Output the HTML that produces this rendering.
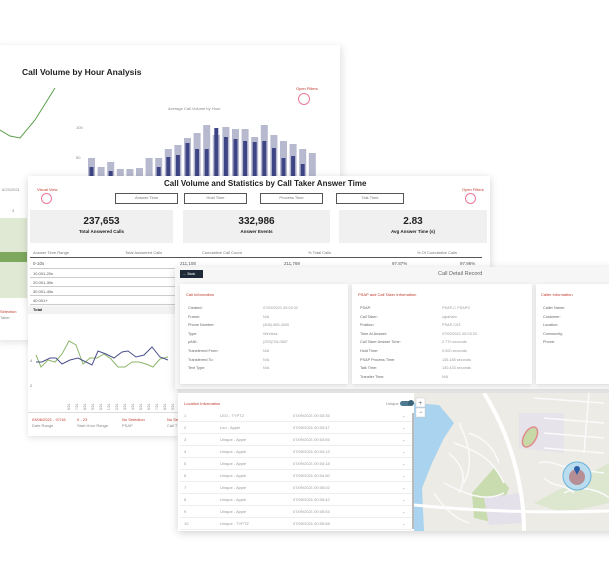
<!DOCTYPE html>
<html><head><meta charset="utf-8"><style>
*{margin:0;padding:0;box-sizing:border-box}
body{width:609px;height:563px;background:#fff;position:relative;overflow:hidden;font-family:"Liberation Sans",sans-serif;color:#444}
.a{position:absolute}
.p{position:absolute;background:#fff;box-shadow:0 2px 8px rgba(0,0,0,.18)}
.t{position:absolute;font-size:4px;color:#888;white-space:nowrap}
.r{color:#c0392b}
.btn{position:absolute;border:1.5px solid #555;height:11px;font-size:4px;color:#777;text-align:center;line-height:8px;background:#fff}
.kpi{position:absolute;background:#f0f0f0;text-align:center}
.kpi b{display:block;font-size:10px;color:#222;margin-top:6px}
.kpi i{display:block;font-style:normal;font-weight:bold;font-size:4.5px;color:#222;margin-top:2px}
.row{position:absolute;left:0;height:9px;border-bottom:1px solid #ccc;font-size:4px;color:#555;line-height:9px;padding-left:3px}
.card{position:absolute;background:#fff;box-shadow:0 1px 4px rgba(0,0,0,.12)}
.lr{position:absolute;left:0;width:232px;height:12px;border-bottom:1px solid #eee;font-size:4px;color:#999;line-height:12px}
</style></head><body>

<div class="p" style="left:-5px;top:45px;width:345px;height:295px;box-shadow:2px 2px 8px rgba(0,0,0,.12)"></div>
<div class="a" style="left:22px;top:67px;font-size:8.5px;font-weight:bold;color:#222">Call Volume by Hour Analysis</div>
<div class="t r" style="left:296px;top:86px">Open Filters</div>
<div class="a" style="left:298px;top:93px;width:12px;height:12px;border:1px solid #e79;border-radius:50%"></div>
<div class="t" style="left:168px;top:106px">Average Call Volume by Hour</div>
<div class="t" style="left:76px;top:125px">100</div>
<div class="t" style="left:76px;top:155px">50</div>
<svg class="a" style="left:0;top:80px" width="340" height="100">
<polyline points="0,50 10,56 20,58 35,40 55,8" fill="none" stroke="#5a9f4a" stroke-width="1"/>
<g fill="#b7b9cf">
<rect x="88" y="78" width="7" height="20"/><rect x="97.6" y="87" width="7" height="11"/><rect x="107.2" y="82" width="7" height="16"/><rect x="116.8" y="89" width="7" height="9"/><rect x="126.4" y="89" width="7" height="9"/><rect x="136" y="88" width="7" height="10"/><rect x="145.6" y="78" width="7" height="20"/><rect x="155.2" y="78" width="7" height="20"/><rect x="164.8" y="69" width="7" height="29"/><rect x="174.4" y="65" width="7" height="33"/><rect x="184" y="58" width="7" height="40"/><rect x="193.6" y="53" width="7" height="45"/><rect x="203.2" y="45" width="7" height="53"/><rect x="212.8" y="55" width="7" height="43"/><rect x="222.4" y="47" width="7" height="51"/><rect x="232" y="49" width="7" height="49"/><rect x="241.6" y="49" width="7" height="49"/><rect x="251.2" y="57" width="7" height="41"/><rect x="260.8" y="45" width="7" height="53"/><rect x="270.4" y="55" width="7" height="43"/><rect x="280" y="61" width="7" height="37"/><rect x="289.6" y="64" width="7" height="34"/><rect x="299.2" y="69" width="7" height="29"/><rect x="308.8" y="73" width="7" height="25"/>
</g>
<g fill="#3d4585">
<rect x="89.5" y="87" width="4" height="11"/><rect x="108.7" y="91" width="4" height="7"/><rect x="156.7" y="87" width="4" height="11"/><rect x="166.3" y="77" width="4" height="21"/><rect x="175.9" y="75" width="4" height="23"/><rect x="185.5" y="63" width="4" height="35"/><rect x="195.1" y="69" width="4" height="29"/><rect x="204.7" y="69" width="4" height="29"/><rect x="214.3" y="48" width="4" height="50"/><rect x="223.9" y="57" width="4" height="41"/><rect x="233.5" y="59" width="4" height="39"/><rect x="243.1" y="61" width="4" height="37"/><rect x="252.7" y="62" width="4" height="36"/><rect x="262.3" y="61" width="4" height="37"/><rect x="271.9" y="68" width="4" height="30"/><rect x="281.5" y="78" width="4" height="20"/><rect x="291.1" y="76" width="4" height="22"/><rect x="300.7" y="84" width="4" height="14"/>
</g></svg>
<div class="t" style="left:2px;top:187px">6/23/2021</div>
<div class="t" style="left:12px;top:208px">3</div>
<div class="a" style="left:0;top:218px;width:27px;height:80px;background:#dfe9d4"></div>
<div class="a" style="left:0;top:252px;width:27px;height:10px;background:#7da85e"></div>
<div class="t r" style="left:0;top:309px">Selection</div>
<div class="t" style="left:0;top:315px">Taker</div>

<div class="p" style="left:28px;top:176px;width:462px;height:130px"></div>
<div class="p" style="left:28px;top:306px;width:150px;height:130px;box-shadow:0 2px 6px rgba(0,0,0,.12)"></div>
<div class="a" style="left:28px;top:306px;width:150px;height:8px;background:#f2f2f2"></div>
<div class="a" style="left:28px;top:179px;width:462px;text-align:center;font-size:8px;font-weight:bold;color:#222;padding-left:56px;white-space:nowrap;text-align:left;padding-left:136px">Call Volume and Statistics by Call Taker Answer Time</div>
<div class="t r" style="left:37px;top:187px">Visual View</div>
<div class="a" style="left:41px;top:193px;width:11px;height:11px;border:1px solid #e79;border-radius:50%"></div>
<div class="t r" style="left:462px;top:187px">Open Filters</div>
<div class="a" style="left:465px;top:193px;width:11px;height:11px;border:1px solid #e79;border-radius:50%"></div>
<div class="btn" style="left:115px;top:193px;width:63px">Answer Time</div>
<div class="btn" style="left:184px;top:193px;width:63px">Hold Time</div>
<div class="btn" style="left:260px;top:193px;width:63px">Process Time</div>
<div class="btn" style="left:336px;top:193px;width:68px">Talk Time</div>
<div class="kpi" style="left:30px;top:210px;width:143px;height:33px"><b>237,653</b><i>Total Answered Calls</i></div>
<div class="kpi" style="left:183px;top:210px;width:147px;height:33px"><b>332,986</b><i>Answer Events</i></div>
<div class="kpi" style="left:339px;top:210px;width:148px;height:33px"><b>2.83</b><i>Avg Answer Time (s)</i></div>
<div class="a" style="left:30px;top:248px;width:452px;height:10px;border-bottom:1.5px solid #555;font-size:4px;color:#777;line-height:9px">
<span class="a" style="left:3px">Answer Time Range</span><span class="a" style="left:95px">Total Answered Calls</span><span class="a" style="left:172px">Cumulative Call Count</span><span class="a" style="left:278px">% Total Calls</span><span class="a" style="left:387px">% Of Cumulative Calls</span></div>
<div class="a" style="left:30px;top:259px;width:452px;height:10px;border-bottom:1px solid #ccc;font-size:4.5px;color:#555;line-height:10px">
<span class="a" style="left:3px">0-10s</span><span class="a" style="left:150px">211,108</span><span class="a" style="left:254px">211,769</span><span class="a" style="left:362px">97.87%</span><span class="a" style="left:430px">97.96%</span></div>
<div class="a" style="left:30px;top:269px;width:148px;height:45px">
<div class="row" style="top:0;width:148px">10.001-20s</div><div class="row" style="top:9px;width:148px">20.001-30s</div><div class="row" style="top:18px;width:148px">30.001-40s</div><div class="row" style="top:27px;width:148px">40.001+</div><div class="row" style="top:36px;width:148px;font-weight:bold;color:#222;border:0">Total</div></div>
<svg class="a" style="left:28px;top:340px" width="150" height="70">
<polyline points="8,15 13,27 20,20 27,22 34,14 41,1 48,5 55,24 62,18 69,18 76,14 83,19 90,27 97,27 104,22 111,22 118,24 125,27 132,19 140,17" fill="none" stroke="#8db56a" stroke-width="1"/>
<polyline points="8,22 14,22 22,18 28,18 34,24 42,20 50,18 58,22 64,25 70,11 78,14 86,18 94,12 100,11 108,17 116,15 124,7 132,17 140,20" fill="none" stroke="#4a4f8c" stroke-width="1"/>
<text x="2" y="22" font-size="4" fill="#777">4</text><text x="2" y="47" font-size="4" fill="#777">2</text>
<g font-size="3.5" fill="#888">
<text transform="translate(42,75) rotate(-90)">4/16/21</text><text transform="translate(50,75) rotate(-90)">4/17/21</text><text transform="translate(58,75) rotate(-90)">4/18/21</text><text transform="translate(66,75) rotate(-90)">4/19/21</text><text transform="translate(74,75) rotate(-90)">4/20/21</text><text transform="translate(82,75) rotate(-90)">4/21/21</text><text transform="translate(90,75) rotate(-90)">4/22/21</text><text transform="translate(98,75) rotate(-90)">4/23/21</text><text transform="translate(106,75) rotate(-90)">4/24/21</text><text transform="translate(114,75) rotate(-90)">4/25/21</text><text transform="translate(122,75) rotate(-90)">4/26/21</text><text transform="translate(130,75) rotate(-90)">4/27/21</text><text transform="translate(138,75) rotate(-90)">4/28/21</text><text transform="translate(146,75) rotate(-90)">4/29/21</text></g></svg>
<div class="a" style="left:28px;top:412px;width:150px;height:1px;background:#ddd"></div>
<div class="t r" style="left:32px;top:417px">03/06/2021 - 07/16</div><div class="t" style="left:32px;top:423px">Date Range</div>
<div class="t r" style="left:77px;top:417px">0 - 23</div><div class="t" style="left:77px;top:423px">Start Hour Range</div>
<div class="t r" style="left:122px;top:417px">No Selection</div><div class="t" style="left:122px;top:423px">PSAP</div>
<div class="t r" style="left:167px;top:417px">No Se</div><div class="t" style="left:167px;top:423px">Call T</div>

<div class="p" style="left:175px;top:267px;width:440px;height:122px;background:#f6f6f6"></div>
<div class="a" style="left:180px;top:270px;width:23px;height:8px;background:#1f2a38;color:#fff;font-size:3.5px;line-height:8px;padding-left:3px">← Back</div>
<div class="a" style="left:438px;top:271px;font-size:5.5px;color:#666">Call Detail Record</div>
<div class="card" style="left:180px;top:284px;width:168px;height:100px"></div>
<div class="card" style="left:352px;top:284px;width:180px;height:100px"></div>
<div class="card" style="left:536px;top:284px;width:80px;height:100px"></div>
<div class="t r" style="left:186px;top:292px">Call Information</div>
<div class="t r" style="left:358px;top:292px">PSAP and Call Taker Information</div>
<div class="t r" style="left:541px;top:292px">Caller Information</div>
<div class="a" style="left:188px;top:304px;font-size:3.8px;color:#666;line-height:8.6px">Created:<br>Frame:<br>Phone Number:<br>Type:<br>pANI:<br>Transferred From:<br>Transferred To:<br>Text Type:</div>
<div class="a" style="left:263px;top:304px;font-size:3.8px;color:#999;line-height:8.6px">07/09/2021 00:03:32<br>N/A<br>(408)-565-4000<br>Wireless<br>(293)726-0657<br>N/A<br>N/A<br>N/A</div>
<div class="a" style="left:360px;top:304px;font-size:3.8px;color:#666;line-height:8.6px">PSAP:<br>Call Taker:<br>Position:<br>Time At Answer:<br>Call Taker Answer Time:<br>Hold Time:<br>PSAP Process Time:<br>Talk Time:<br>Transfer Time:</div>
<div class="a" style="left:442px;top:304px;font-size:3.8px;color:#999;line-height:8.6px">PSAP-C PSAPS<br>cgraham<br>PSAP-C03<br>07/09/2021 00:03:33<br>2.770 seconds<br>0.000 seconds<br>135.185 seconds<br>130.433 seconds<br>N/A</div>
<div class="a" style="left:543px;top:304px;font-size:3.8px;color:#666;line-height:8.6px">Caller Name:<br>Customer:<br>Location:<br>Community:<br>Phone:</div>

<div class="p" style="left:178px;top:393px;width:440px;height:138px"></div>
<div class="t r" style="left:184px;top:401px">Location Information</div>
<div class="t" style="left:386px;top:401px">Unique</div>
<div class="a" style="left:400px;top:401px;width:12px;height:5px;border-radius:3px;background:#4d7a90"></div>
<div class="a" style="left:408px;top:400px;width:6px;height:6px;border-radius:50%;background:#3a6478"></div>
<div class="a" style="left:180px;top:410px">
<div class="lr" style="top:0"><span class="a" style="left:4px">1</span><span class="a" style="left:40px">LEO - TYPTZ</span><span class="a" style="left:113px">07/09/2021 00:03:35</span><span class="a" style="left:222px">⌄</span></div>
<div class="lr" style="top:12px"><span class="a" style="left:4px">2</span><span class="a" style="left:40px">Leo - Apple</span><span class="a" style="left:113px">07/09/2021 00:03:47</span><span class="a" style="left:222px">⌄</span></div>
<div class="lr" style="top:24px"><span class="a" style="left:4px">3</span><span class="a" style="left:40px">Unique - Apple</span><span class="a" style="left:113px">07/09/2021 00:03:55</span><span class="a" style="left:222px">⌄</span></div>
<div class="lr" style="top:36px"><span class="a" style="left:4px">4</span><span class="a" style="left:40px">Unique - Apple</span><span class="a" style="left:113px">07/09/2021 00:04:13</span><span class="a" style="left:222px">⌄</span></div>
<div class="lr" style="top:48px"><span class="a" style="left:4px">5</span><span class="a" style="left:40px">Unique - Apple</span><span class="a" style="left:113px">07/09/2021 00:04:18</span><span class="a" style="left:222px">⌄</span></div>
<div class="lr" style="top:60px"><span class="a" style="left:4px">6</span><span class="a" style="left:40px">Unique - Apple</span><span class="a" style="left:113px">07/09/2021 00:04:50</span><span class="a" style="left:222px">⌄</span></div>
<div class="lr" style="top:72px"><span class="a" style="left:4px">7</span><span class="a" style="left:40px">Unique - Apple</span><span class="a" style="left:113px">07/09/2021 00:05:02</span><span class="a" style="left:222px">⌄</span></div>
<div class="lr" style="top:84px"><span class="a" style="left:4px">8</span><span class="a" style="left:40px">Unique - Apple</span><span class="a" style="left:113px">07/09/2021 00:05:42</span><span class="a" style="left:222px">⌄</span></div>
<div class="lr" style="top:96px"><span class="a" style="left:4px">9</span><span class="a" style="left:40px">Unique - Apple</span><span class="a" style="left:113px">07/09/2021 00:05:53</span><span class="a" style="left:222px">⌄</span></div>
<div class="lr" style="top:108px"><span class="a" style="left:4px">10</span><span class="a" style="left:40px">Unique - TYPTZ</span><span class="a" style="left:113px">07/09/2021 00:05:58</span><span class="a" style="left:222px">⌄</span></div>
</div>
<div class="a" style="left:412px;top:413px;width:2px;height:116px;background:#bbb"></div>
<svg class="a" style="left:414px;top:393px" width="195" height="138">
<rect width="195" height="138" fill="#ecebe6"/>
<path d="M0,10 L25,12 L40,30 L30,45 L18,70 L8,95 L10,138 L0,138 Z" fill="#a9d3ee"/>
<path d="M58,100 L80,75 L95,95 L82,130 L60,125 Z" fill="#c9dcb0"/>
<path d="M105,20 L150,20 L150,60 L105,55 Z" fill="#e6e3ea"/>
<path d="M70,105 L105,100 L110,130 L75,132 Z" fill="#e4e1ea"/>
<path d="M120,110 L195,70 L195,110 L150,120 Z" fill="#dde6cf"/>
<ellipse cx="116" cy="44" rx="6" ry="11" transform="rotate(30 116 44)" fill="#c8d9a8" stroke="#e08c8c" stroke-width="1.5"/>
<path d="M70,0 C95,40 110,90 110,138" fill="none" stroke="#fff" stroke-width="4"/>
<path d="M0,112 C60,118 130,120 195,118" fill="none" stroke="#fff" stroke-width="3"/>
<g fill="none" stroke="#fafafa" stroke-width="1.5">
<path d="M45,30 C55,50 60,70 50,90"/><path d="M40,50 C70,60 80,70 90,90"/><path d="M130,40 L190,45"/><path d="M130,55 L190,60"/><path d="M130,25 L190,30"/><path d="M150,75 L190,80"/><path d="M30,90 C50,100 70,110 90,100"/><path d="M150,100 C170,90 190,100 195,105"/>
<path d="M35,60 C45,70 55,80 45,100"/><path d="M55,40 C70,45 80,55 85,70"/><path d="M125,70 C140,65 150,80 160,70"/><path d="M130,85 C140,95 150,90 160,100"/><path d="M175,0 L170,60"/><path d="M120,5 L190,10"/><path d="M20,100 C30,115 40,125 55,130"/></g>
<circle cx="163" cy="83" r="14" fill="#b9dcef" stroke="#6ab4dc" stroke-width="1"/>
<circle cx="163" cy="84" r="8" fill="#b58f95"/>
<path d="M163,73 a3,3 0 0 1 3,3 l-3,6 l-3,-6 a3,3 0 0 1 3,-3z" fill="#2b5da8"/>
<rect x="2" y="5" width="9" height="9" fill="#fff" stroke="#ccc" stroke-width=".5"/><rect x="2" y="15" width="9" height="9" fill="#fff" stroke="#ccc" stroke-width=".5"/>
<text x="4.5" y="12" font-size="6" fill="#555">+</text><text x="5" y="21" font-size="6" fill="#555">−</text>
</svg>
</body></html>
